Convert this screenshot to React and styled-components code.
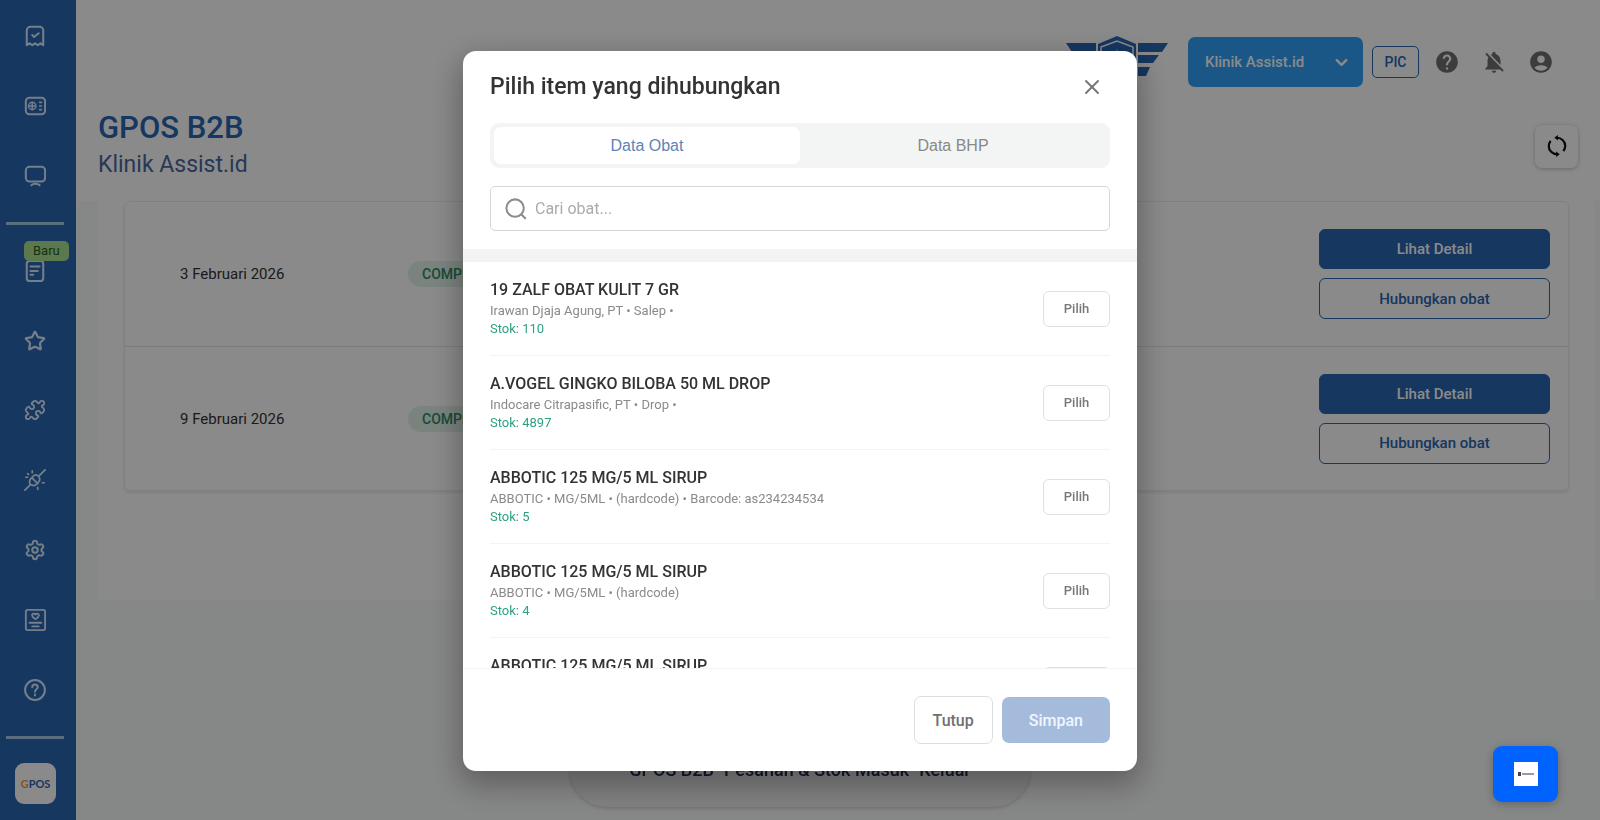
import React, { useState } from 'react';
import styled, { createGlobalStyle } from 'styled-components';
import { MdHelp, MdNotificationsOff, MdAccountCircle } from 'react-icons/md';
import { ChevronDown, Puzzle, Settings, Star, X } from 'lucide-react';

const GlobalStyle = createGlobalStyle`
  * {
    box-sizing: border-box;
  }
  body {
    margin: 0;
    background: #f8fbf9;
    font-family: Roboto, "Liberation Sans", sans-serif;
    color: #333;
  }
  button, input, select {
    font-family: inherit;
  }
  h1, h2, h3, p, ul {
    margin: 0;
    padding: 0;
  }
`;

const colors = {
  navy: '#2966b2',
  sky: '#30a2f8',
  green: '#2fa084',
};

const Page = styled.div`
  display: flex;
  height: 100vh;
  overflow: hidden;
`;

const Sidebar = styled.nav`
  display: flex;
  flex-direction: column;
  width: 76px;
  flex-shrink: 0;
  background: ${colors.navy};
  padding: 1px 6px 16px;
`;

const NavLink = styled.a`
  position: relative;
  display: flex;
  align-items: center;
  height: 70px;
  padding-left: 18px;
  color: #d9eaff;
`;

const NavDivider = styled.hr`
  width: 58px;
  height: 3px;
  flex-shrink: 0;
  margin: ${({ $last }) => ($last ? '11px 0 24px' : '11px 0')};
  border: 0;
  background: #a9cbe8;
`;

const NewBadge = styled.span`
  position: absolute;
  top: 5px;
  left: 18px;
  padding: 0 9px;
  border-radius: 5px;
  background: #a9e08d;
  color: #2b5a20;
  font-size: 13px;
  line-height: 20px;
`;

const BrandTile = styled.a`
  display: flex;
  align-items: center;
  justify-content: center;
  width: 41px;
  height: 41px;
  flex-shrink: 0;
  margin-left: 9px;
  border-radius: 9px;
  background: #fff;
  color: ${colors.navy};
  font-family: Lato, sans-serif;
  font-size: 11px;
  font-weight: 700;
  text-decoration: none;
  span {
    color: #f0a030;
  }
`;

const Main = styled.main`
  flex: 1;
  min-width: 0;
`;

const TopArea = styled.div`
  background: #fff;
  height: 201px;
  padding: 37px 22px 0;
`;

const Header = styled.header`
  display: flex;
  align-items: center;
  justify-content: flex-end;
  height: 50px;
  padding-right: 24px;
`;

const ClinicPicker = styled.button`
  display: flex;
  align-items: center;
  justify-content: space-between;
  width: 175px;
  height: 50px;
  margin: 0 9px 0 20px;
  padding: 0 12px 0 17px;
  border: 0;
  border-radius: 7px;
  background: ${colors.sky};
  color: #fff;
  font-size: 15px;
  font-weight: 500;
`;

const PicButton = styled.button`
  width: 47px;
  height: 32px;
  margin-right: 15px;
  border: 1px solid ${colors.navy};
  border-radius: 5px;
  background: #fff;
  color: ${colors.navy};
  font-size: 14px;
  font-weight: 500;
`;

const IconButton = styled.button`
  display: flex;
  padding: 0;
  border: 0;
  background: none;
  color: #6f6f6f;
  & + & {
    margin-left: 21px;
  }
`;

const TitleRow = styled.div`
  display: flex;
  align-items: center;
  justify-content: space-between;
  margin-top: 22px;
`;

const PageTitle = styled.h1`
  color: ${colors.navy};
  font-size: 31px;
  font-weight: 500;
  line-height: 38px;
`;

const PageSubtitle = styled.p`
  color: #4a689f;
  font-size: 23px;
  line-height: 36px;
`;

const RefreshButton = styled.button`
  display: flex;
  align-items: center;
  justify-content: center;
  width: 43px;
  height: 43px;
  border: 0;
  border-radius: 7px;
  background: #fff;
  color: #111;
  box-shadow: 0 1px 4px rgba(0, 0, 0, 0.25);
`;

const Panel = styled.section`
  height: 399px;
  margin: 0 5px 0 22px;
  padding: 0 26px;
  background: #fff;
`;

const OrderTable = styled.table`
  width: 100%;
  border-spacing: 0;
  border: 1px solid #ededed;
  border-radius: 6px;
  box-shadow: 0 2px 3px rgba(0, 0, 0, 0.08);
  table-layout: fixed;
  td {
    height: 144px;
    padding: 0;
    font-size: 15px;
  }
  tr + tr td {
    border-top: 1px solid #e6e6e6;
  }
  td:first-child {
    width: 283px;
    padding-left: 55px;
  }
  td:last-child {
    width: 249px;
    padding-right: 18px;
  }
`;

const StatusChip = styled.span`
  display: inline-block;
  padding: 0 14px;
  border-radius: 13px;
  background: #e3f3eb;
  color: #2c8a68;
  font-size: 14px;
  font-weight: 500;
  line-height: 26px;
`;

const OrderActions = styled.div`
  display: grid;
  gap: 9px;
`;

const OrderButton = styled.button`
  height: ${({ $outline }) => ($outline ? '41px' : '40px')};
  border: 1px solid ${colors.navy};
  border-radius: 6px;
  background: ${({ $outline }) => ($outline ? '#fff' : colors.navy)};
  color: ${({ $outline }) => ($outline ? colors.navy : '#fff')};
  font-size: 15px;
  font-weight: 500;
`;

const Announcement = styled.div`
  position: fixed;
  bottom: 13px;
  left: 50%;
  width: 460px;
  height: 75px;
  margin-left: -230px;
  border-radius: 38px;
  background: #efefef;
  box-shadow: 0 1px 4px rgba(0, 0, 0, 0.2);
  color: #202f55;
  font-size: 18px;
  font-weight: 500;
  line-height: 76px;
  text-align: center;
`;

const Overlay = styled.div`
  position: fixed;
  inset: 0;
  display: flex;
  align-items: center;
  justify-content: center;
  padding: 51px 16px 49px;
  background: rgba(0, 0, 0, 0.46);
`;

const Dialog = styled.div`
  display: flex;
  flex-direction: column;
  width: 100%;
  max-width: 674px;
  height: 100%;
  overflow: hidden;
  border-radius: 13px;
  background: #fff;
  box-shadow: 0 11px 30px 4px rgba(0, 0, 0, 0.3);
`;

const DialogHeader = styled.div`
  display: flex;
  align-items: center;
  justify-content: space-between;
  padding: 22px 33px 22px 27px;
`;

const DialogTitle = styled.h2`
  font-size: 23px;
  font-weight: 500;
  line-height: 28px;
`;

const CloseButton = styled.button`
  display: flex;
  padding: 0;
  border: 0;
  background: none;
  color: #777;
`;

const Tabs = styled.div`
  display: grid;
  grid-template-columns: 1fr 1fr;
  margin: 0 27px;
  padding: 4px;
  border-radius: 9px;
  background: #f3f5f5;
`;

const Tab = styled.button`
  height: 37px;
  border: 0;
  border-radius: 7px;
  background: ${({ $active }) => ($active ? '#fff' : 'transparent')};
  color: ${({ $active }) => ($active ? '#5c84b8' : '#888')};
  font-family: "Liberation Sans", sans-serif;
  font-size: 16px;
`;

const SearchBox = styled.label`
  display: flex;
  align-items: center;
  gap: 8px;
  height: 45px;
  flex-shrink: 0;
  margin: 18px 27px;
  padding: 0 14px;
  border: 1px solid #d6d6d6;
  border-radius: 5px;
  color: #8c8c8c;
  input {
    flex: 1;
    padding: 0;
    border: 0;
    outline: 0;
    color: #333;
    font-size: 16px;
  }
  input::placeholder {
    color: #ababab;
  }
`;

const ItemList = styled.ul`
  flex: 1;
  min-height: 0;
  padding: 0 27px;
  overflow: hidden;
  border-top: 13px solid #f1f3f5;
  list-style: none;
`;

const Item = styled.li`
  display: flex;
  align-items: center;
  justify-content: space-between;
  height: 94px;
  border-bottom: 1px solid #f4f4f4;
`;

const ItemName = styled.h3`
  margin-bottom: 2px;
  font-size: 16px;
  font-weight: 500;
  line-height: 20px;
`;

const ItemText = styled.p`
  color: ${({ $stock }) => ($stock ? colors.green : '#8a8a8a')};
  font-size: 13px;
  line-height: 18px;
`;

const PickButton = styled.button`
  width: 67px;
  height: 36px;
  border: 1px solid #e0e0e0;
  border-radius: 6px;
  background: #fff;
  color: #777;
  font-size: 13px;
  font-weight: 500;
`;

const DialogFooter = styled.div`
  display: flex;
  justify-content: flex-end;
  align-items: center;
  gap: 9px;
  padding: 27px;
  border-top: 1px solid #f4f4f4;
`;

const FooterButton = styled.button`
  height: ${({ $primary }) => ($primary ? '46px' : '48px')};
  padding: 0 ${({ $primary }) => ($primary ? '27px' : '18px')};
  border: ${({ $primary }) => ($primary ? '0' : '1px solid #ddd')};
  border-radius: 7px;
  background: ${({ $primary }) => ($primary ? '#a5bbdc' : '#fff')};
  color: ${({ $primary }) => ($primary ? '#f0f6ff' : '#707070')};
  font-size: 16px;
  font-weight: 500;
`;

const ChatButton = styled.button`
  position: fixed;
  right: 42px;
  bottom: 18px;
  display: flex;
  align-items: center;
  justify-content: center;
  width: 65px;
  height: 56px;
  padding: 0;
  border: 0;
  border-radius: 9px;
  background: #0063ff;
  box-shadow: 0 2px 8px rgba(0, 0, 0, 0.25);
`;

const strokeProps = {
  width: 22,
  height: 22,
  viewBox: '0 0 24 24',
  fill: 'none',
  stroke: 'currentColor',
  strokeWidth: 2.2,
  strokeLinecap: 'round',
  strokeLinejoin: 'round',
};

const ReceiptIcon = () => (
  <svg {...strokeProps}>
    <path d="M3 22V6a4 4 0 0 1 4-4h10a4 4 0 0 1 4 4v16l-3-2-3 2-3-2-3 2-3-2z" />
    <path d="M9 11l2 2 5-4" />
  </svg>
);

const CardIcon = () => (
  <svg {...strokeProps}>
    <rect x="2" y="3" width="21" height="18" rx="4" />
    <circle cx="9" cy="12" r="4" strokeWidth="1.6" />
    <path d="M9 9v6M6 12h6M17 8h2M17 12h2M17 16h2" strokeWidth="1.8" />
  </svg>
);

const MonitorIcon = () => (
  <svg {...strokeProps}>
    <rect x="2" y="2" width="21" height="16" rx="4" />
    <path d="M8 22c1-1 2-1.5 4.500-1.500S16 21 17 22" />
  </svg>
);

const NoteIcon = () => (
  <svg {...strokeProps}>
    <rect x="3" y="1" width="18" height="22" rx="3" />
    <path d="M7 7h10M7 12h8M7 16h3" />
  </svg>
);

const PlugIcon = () => (
  <svg {...strokeProps} strokeWidth="1.9">
    <path d="M1 23l6-6M17 7l6-6" />
    <path d="M7 17c-2-3-1-5 1-7l3-3c2-1 4 0 5 1s2 4 0 6l-3 3c-2 2-4 1-6 0z" />
    <path d="M9 10l6 6M9 4V2M4 9H2M20 15h2M15 20v2M4 5l1 1" />
  </svg>
);

const PatientIcon = () => (
  <svg {...strokeProps} strokeWidth="2">
    <rect x="2" y="1" width="21" height="22" rx="2" />
    <path d="M12.500 11C8 9 8 5 10.500 5c1 0 2 1 2 1s1-1 2-1c2.500 0 2.500 4-2 6zM6 15h13M9 19h7" />
  </svg>
);

const HelpIcon = () => (
  <svg {...strokeProps}>
    <circle cx="12" cy="12" r="10.800" />
    <path d="M9 9c0-4 6-4 6 0 0 2-3 2-3 5M12 17v1" />
  </svg>
);

const RefreshIcon = () => (
  <svg {...strokeProps} strokeWidth="2.400" strokeLinecap="butt">
    <path d="M12 3c5 0 9 4 9 9 0 2-1 4-2 5.500M12 21c-5 0-9-4-9-9 0-2 1-4 2-5.500" />
    <path d="M13 0v6L9 3zM11 18v6l4-3z" fill="currentColor" stroke="none" />
  </svg>
);

const SearchIcon = () => (
  <svg {...strokeProps}>
    <circle cx="11" cy="11" r="9.500" />
    <path d="M18 18l4 4" />
  </svg>
);

const WingLogo = () => (
  <svg width="102" height="52" viewBox="0 0 102 52" fill={colors.navy}>
    <path d="M0 7h30v9H6zM9 19h21v8H15zM17 31h13v9h-8zM102 7H72v9h24zM93 19H72v8h15zM84 31H72v9h8z" />
    <path d="M32 8L51 0l19 8v32l-19 11-19-11z" />
    <path d="M35 11l16-6 16 6v26l-16 9-16-9z" stroke="#fff" strokeWidth="1.500" />
    <path d="M51 12l2 4 4 1-4 2-2 4-2-4-4-2 4-1z" fill={colors.sky} />
  </svg>
);

const orders = ['3 Februari 2026', '9 Februari 2026'];

const items = [
  { name: '19 ZALF OBAT KULIT 7 GR', detail: 'Irawan Djaja Agung, PT • Salep •', stock: 110 },
  { name: 'A.VOGEL GINGKO BILOBA 50 ML DROP', detail: 'Indocare Citrapasific, PT • Drop •', stock: 4897 },
  { name: 'ABBOTIC 125 MG/5 ML SIRUP', detail: 'ABBOTIC • MG/5ML • (hardcode) • Barcode: as234234534', stock: 5 },
  { name: 'ABBOTIC 125 MG/5 ML SIRUP', detail: 'ABBOTIC • MG/5ML • (hardcode)', stock: 4 },
  { name: 'ABBOTIC 125 MG/5 ML SIRUP', detail: 'ABBOTIC • MG/5ML • (hardcode)', stock: 3 },
];

const SideNav = () => (
  <Sidebar>
    <NavLink href="#kasir" aria-label="Kasir"><ReceiptIcon /></NavLink>
    <NavLink href="#kartu" aria-label="Kartu"><CardIcon /></NavLink>
    <NavLink href="#monitor" aria-label="Monitor"><MonitorIcon /></NavLink>
    <NavDivider />
    <NavLink href="#pesanan" aria-label="Pesanan">
      <NoteIcon />
      <NewBadge>Baru</NewBadge>
    </NavLink>
    <NavLink href="#favorit" aria-label="Favorit"><Star size={22} strokeWidth={2.4} /></NavLink>
    <NavLink href="#integrasi" aria-label="Integrasi"><Puzzle size={22} /></NavLink>
    <NavLink href="#koneksi" aria-label="Koneksi"><PlugIcon /></NavLink>
    <NavLink href="#pengaturan" aria-label="Pengaturan"><Settings size={22} strokeWidth={2.2} /></NavLink>
    <NavLink href="#pasien" aria-label="Pasien"><PatientIcon /></NavLink>
    <NavLink href="#bantuan" aria-label="Bantuan"><HelpIcon /></NavLink>
    <NavDivider $last />
    <BrandTile href="#gpos"><span>G</span>POS</BrandTile>
  </Sidebar>
);

const ItemDialog = () => {
  const [ tab, setTab ] = useState('obat');
  const [ keyword, setKeyword ] = useState('');

  return (
    <Overlay>
      <Dialog role="dialog" aria-labelledby="dialog-title">
        <DialogHeader>
          <DialogTitle id="dialog-title">Pilih item yang dihubungkan</DialogTitle>
          <CloseButton aria-label="Tutup dialog"><X size={24} /></CloseButton>
        </DialogHeader>
        <Tabs role="tablist">
          <Tab role="tab" $active={tab === 'obat'} onClick={() => setTab('obat')}>Data Obat</Tab>
          <Tab role="tab" $active={tab === 'bhp'} onClick={() => setTab('bhp')}>Data BHP</Tab>
        </Tabs>
        <SearchBox>
          <SearchIcon />
          <input
            aria-label="Cari obat"
            placeholder="Cari obat..."
            value={keyword}
            onChange={(e) => setKeyword(e.target.value)}
          />
        </SearchBox>
        <ItemList>
          {items.map((item, i) => (
            <Item key={i}>
              <div>
                <ItemName>{item.name}</ItemName>
                <ItemText>{item.detail}</ItemText>
                <ItemText $stock>Stok: {item.stock}</ItemText>
              </div>
              <PickButton>Pilih</PickButton>
            </Item>
          ))}
        </ItemList>
        <DialogFooter>
          <FooterButton>Tutup</FooterButton>
          <FooterButton $primary>Simpan</FooterButton>
        </DialogFooter>
      </Dialog>
    </Overlay>
  );
};

const App = () => (
  <>
    <GlobalStyle />
    <Page>
      <SideNav />
      <Main>
        <TopArea>
          <Header>
            <WingLogo />
            <ClinicPicker>Klinik Assist.id <ChevronDown size={19} strokeWidth={3} /></ClinicPicker>
            <PicButton>PIC</PicButton>
            <IconButton aria-label="Bantuan"><MdHelp size={26} /></IconButton>
            <IconButton aria-label="Notifikasi"><MdNotificationsOff size={26} /></IconButton>
            <IconButton aria-label="Akun"><MdAccountCircle size={26} /></IconButton>
          </Header>
          <TitleRow>
            <div>
              <PageTitle>GPOS B2B</PageTitle>
              <PageSubtitle>Klinik Assist.id</PageSubtitle>
            </div>
            <RefreshButton aria-label="Muat ulang"><RefreshIcon /></RefreshButton>
          </TitleRow>
        </TopArea>
        <Panel>
          <OrderTable>
            <tbody>
              {orders.map((date) => (
                <tr key={date}>
                  <td>{date}</td>
                  <td><StatusChip>COMPLETED</StatusChip></td>
                  <td>
                    <OrderActions>
                      <OrderButton>Lihat Detail</OrderButton>
                      <OrderButton $outline>Hubungkan obat</OrderButton>
                    </OrderActions>
                  </td>
                </tr>
              ))}
            </tbody>
          </OrderTable>
        </Panel>
      </Main>
    </Page>
    <Announcement>GPOS B2B "Pesanan &amp; Stok Masuk" Keluar</Announcement>
    <ItemDialog />
    <ChatButton aria-label="Chat">
      <svg width="24" height="24" viewBox="0 0 24 24">
        <path d="M0 0h24v24H0z" fill="#fff" />
        <path d="M4 10h3v4H4z" fill="#445" />
        <path d="M8 12h12" stroke="#99a" strokeWidth="2" />
      </svg>
    </ChatButton>
  </>
);

export default App;
